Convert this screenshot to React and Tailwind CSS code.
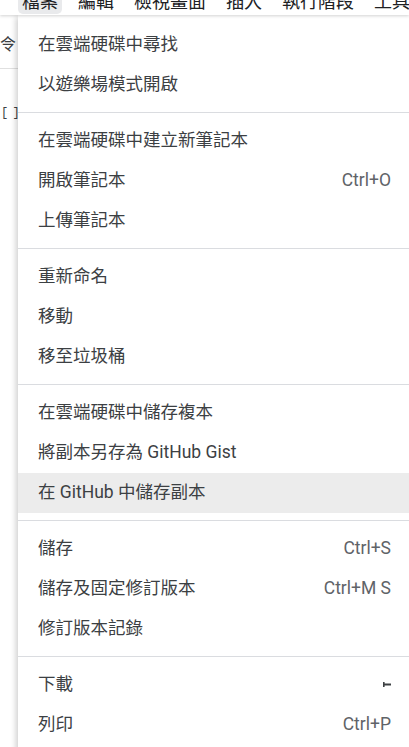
import React from "react";

const menuBar = ["檔案", "編輯", "檢視畫面", "插入", "執行階段", "工具"];

const sections = [
  [{ label: "在雲端硬碟中尋找" }, { label: "以遊樂場模式開啟" }],
  [
    { label: "在雲端硬碟中建立新筆記本" },
    { label: "開啟筆記本", key: "Ctrl+O" },
    { label: "上傳筆記本" },
  ],
  [{ label: "重新命名" }, { label: "移動" }, { label: "移至垃圾桶" }],
  [
    { label: "在雲端硬碟中儲存複本" },
    { label: "將副本另存為 GitHub Gist" },
    { label: "在 GitHub 中儲存副本", active: true },
  ],
  [
    { label: "儲存", key: "Ctrl+S" },
    { label: "儲存及固定修訂版本", key: "Ctrl+M S" },
    { label: "修訂版本記錄" },
  ],
  [{ label: "下載", sub: true }, { label: "列印", key: "Ctrl+P" }],
];

const SubArrow = () => (
  <svg width="8" height="5" viewBox="0 0 8 5" className="fill-[#3c4043]">
    <path d="M0 0H1.6V1.4H8V3.4H1.6V5H0Z" />
  </svg>
);

const MenuItem = ({ item }) => (
  <div
    className={`h-[40px] flex items-center justify-between pl-[20px] pr-[18px] ${
      item.active ? "bg-[#ececec]" : ""
    }`}
  >
    <span className="text-[17.5px] text-[#3c4043]">{item.label}</span>
    {item.key && (
      <span className="text-[17.5px] text-[#5f6368]">{item.key}</span>
    )}
    {item.sub && <SubArrow />}
  </div>
);

export default function App() {
  return (
    <div className="w-[409px] h-[747px] overflow-hidden bg-white font-['Roboto','Noto_Sans_CJK_TC',sans-serif]">
      <div className="relative z-10 h-[15px] flex gap-[12px] pl-[18px] overflow-hidden bg-white shadow-[0_1px_3px_rgba(0,0,0,0.18)] whitespace-nowrap">
        {menuBar.map((m, i) => (
          <div
            key={m}
            className={`h-[14px] px-[4px] rounded-b-[5px] shrink-0 ${
              i === 0 ? "bg-[#e9eaec]" : ""
            }`}
          >
            <div className="-mt-[10px] text-[18px] leading-[24px] text-[#202124]">
              {m}
            </div>
          </div>
        ))}
      </div>
      <div className="flex">
        <div className="w-[18px] shrink-0 overflow-hidden">
          <div className="h-[54px] border-b border-[#e0e0e0] pt-[20px] text-[16px] leading-[20px] text-[#3c4043]">
            令
          </div>
          <div className="mt-[35px] ml-[1px] font-['Liberation_Mono',monospace] text-[12px] tracking-[-1.5px] text-[#3c4043] whitespace-pre">
            [ ]
          </div>
        </div>
        <div className="relative flex-1 bg-white shadow-[-2px_2px_6px_rgba(0,0,0,0.2)]">
          {sections.map((sec, i) => (
            <div
              key={i}
              className={
                i > 0
                  ? "py-[7.5px] border-t border-[#dadce0]"
                  : "pt-[9px] pb-[8px]"
              }
            >
              {sec.map((item) => (
                <MenuItem key={item.label} item={item} />
              ))}
            </div>
          ))}
        </div>
      </div>
    </div>
  );
}
